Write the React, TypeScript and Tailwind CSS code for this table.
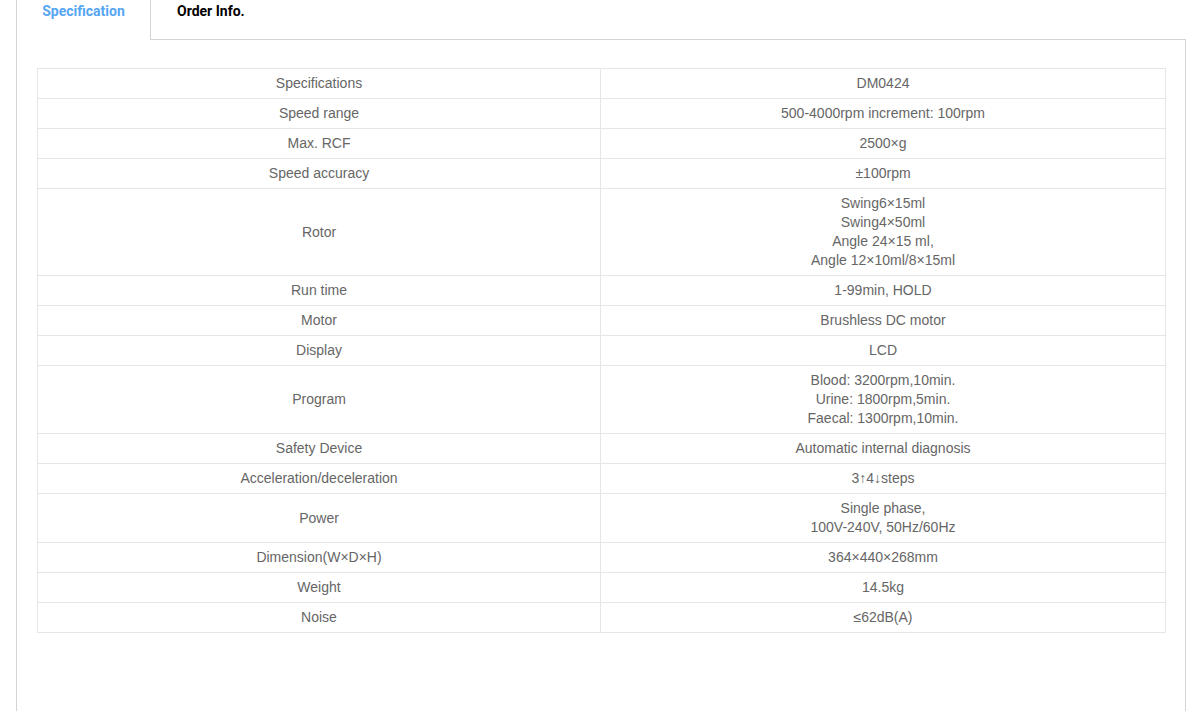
import React from 'react'

// spec rows: label + value lines
const rows: { label: string; value: string[] }[] = [
  { label: 'Specifications', value: ['DM0424'] },
  { label: 'Speed range', value: ['500-4000rpm increment: 100rpm'] },
  { label: 'Max. RCF', value: ['2500×g'] },
  { label: 'Speed accuracy', value: ['±100rpm'] },
  {
    label: 'Rotor',
    value: ['Swing6×15ml', 'Swing4×50ml', 'Angle 24×15 ml,', 'Angle 12×10ml/8×15ml'],
  },
  { label: 'Run time', value: ['1-99min, HOLD'] },
  { label: 'Motor', value: ['Brushless DC motor'] },
  { label: 'Display', value: ['LCD'] },
  {
    label: 'Program',
    value: ['Blood: 3200rpm,10min.', 'Urine: 1800rpm,5min.', 'Faecal: 1300rpm,10min.'],
  },
  { label: 'Safety Device', value: ['Automatic internal diagnosis'] },
  { label: 'Acceleration/deceleration', value: ['3↑4↓steps'] },
  { label: 'Power', value: ['Single phase,', '100V-240V, 50Hz/60Hz'] },
  { label: 'Dimension(W×D×H)', value: ['364×440×268mm'] },
  { label: 'Weight', value: ['14.5kg'] },
  { label: 'Noise', value: ['≤62dB(A)'] },
]

export default function App() {
  return (
    <div className="h-[711px] w-[1189px] overflow-hidden bg-white pl-4">
      <div className="flex h-full w-[1170px] flex-col border-l border-[#d4d4d4]">
        {/* tabs */}
        <div className="flex h-[40px] shrink-0 font-['Roboto',sans-serif] text-[14px] font-bold">
          <div className="w-[134px] border-r border-[#d4d4d4] pt-px text-center leading-[20px] text-[#56a6f3]">
            Specification
          </div>
          <div className="flex-1 border-b border-[#d4d4d4] pl-[26px] pt-px leading-[20px] text-black">
            Order Info.
          </div>
        </div>

        {/* panel */}
        <div className="flex-1 border-r border-[#d4d4d4] pl-[20px] pr-[19px] pt-[28px]">
          <table className="w-[1129px] table-fixed border-collapse font-['Liberation_Sans',Arial,sans-serif] text-[14px] leading-[19px] text-[#666]">
            <colgroup>
              <col className="w-[563px]" />
              <col />
            </colgroup>
            <tbody>
              {rows.map((row) => (
                <tr key={row.label}>
                  <td className="border border-[#e6e6e6] py-[5px] text-center align-middle">
                    {row.label}
                  </td>
                  <td className="border border-[#e6e6e6] py-[5px] text-center align-middle">
                    {row.value.map((line) => (
                      <div key={line}>{line}</div>
                    ))}
                  </td>
                </tr>
              ))}
            </tbody>
          </table>
        </div>
      </div>
    </div>
  )
}
